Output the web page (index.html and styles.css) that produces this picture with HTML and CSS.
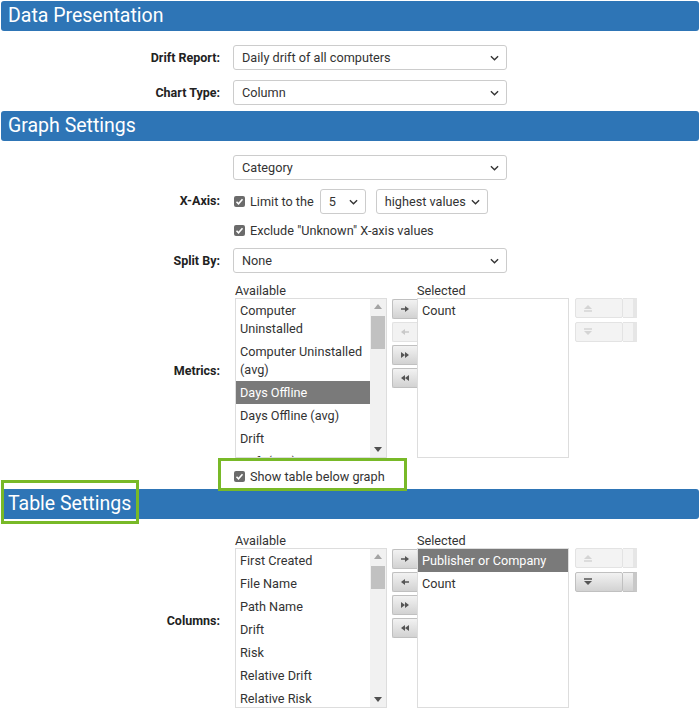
FILE: index.html
```html
<!DOCTYPE html>
<html lang="en">
<head>
  <meta charset="UTF-8">
  <title>Report Settings</title>
  <link rel="stylesheet" href="styles.css">
</head>
<body>
  <div class="panel">
    <h2 class="section-title">Data Presentation</h2>
    <div class="form form-first">
      <div class="form-row">
        <label class="field-label">Drift Report:</label>
        <div class="select select-wide"><span>Daily drift of all computers</span><svg class="chev" viewBox="0 0 10 6"><path d="M1 1l4 4 4-4"/></svg></div>
      </div>
      <div class="form-row gap-10">
        <label class="field-label">Chart Type:</label>
        <div class="select select-wide"><span>Column</span><svg class="chev" viewBox="0 0 10 6"><path d="M1 1l4 4 4-4"/></svg></div>
      </div>
    </div>

    <h2 class="section-title gap-6">Graph Settings</h2>
    <div class="form form-first">
      <div class="form-row">
        <label class="field-label xaxis-label">X-Axis:</label>
        <div class="field-stack">
          <div class="select select-wide"><span>Category</span><svg class="chev" viewBox="0 0 10 6"><path d="M1 1l4 4 4-4"/></svg></div>
          <div class="inline-row">
            <span class="check"><svg viewBox="0 0 11 11"><path d="M2.5 5.8l2 2 4-4.6"/></svg></span>
            <span class="check-text">Limit to the</span>
            <div class="select select-num"><span>5</span><svg class="chev" viewBox="0 0 10 6"><path d="M1 1l4 4 4-4"/></svg></div>
            <div class="select select-sort"><span>highest values</span><svg class="chev" viewBox="0 0 10 6"><path d="M1 1l4 4 4-4"/></svg></div>
          </div>
          <div class="inline-row exclude-row">
            <span class="check"><svg viewBox="0 0 11 11"><path d="M2.5 5.8l2 2 4-4.6"/></svg></span>
            <span class="check-text">Exclude "Unknown" X-axis values</span>
          </div>
        </div>
      </div>
      <div class="form-row gap-10">
        <label class="field-label">Split By:</label>
        <div class="select select-wide"><span>None</span><svg class="chev" viewBox="0 0 10 6"><path d="M1 1l4 4 4-4"/></svg></div>
      </div>
      <div class="form-row gap-10">
        <label class="field-label">Metrics:</label>
        <div class="transfer">
          <div class="list-col">
            <div class="list-title">Available</div>
            <div class="listbox">
              <ul class="list-items">
                <li>Computer<br>Uninstalled</li>
                <li>Computer Uninstalled (avg)</li>
                <li class="selected">Days Offline</li>
                <li>Days Offline (avg)</li>
                <li>Drift</li>
                <li>Drift (avg)</li>
              </ul>
              <div class="scrollbar">
                <svg class="scroll-up" viewBox="0 0 8 5"><path d="M0 5l4-5 4 5z"/></svg>
                <div class="scroll-thumb thumb-metrics"></div>
                <svg class="scroll-down" viewBox="0 0 8 5"><path d="M0 0l4 5 4-5z"/></svg>
              </div>
            </div>
          </div>
          <div class="move-buttons">
            <button class="btn"><svg viewBox="0 0 10 8"><path class="stroke" d="M1 4h6"/><path d="M5 1l4 3-4 3z"/></svg></button>
            <button class="btn disabled"><svg viewBox="0 0 10 8"><path class="stroke" d="M3 4h6"/><path d="M5 1L1 4l4 3z"/></svg></button>
            <button class="btn"><svg viewBox="0 0 10 8"><path d="M1 1l4 3-4 3zM5 1l4 3-4 3z"/></svg></button>
            <button class="btn"><svg viewBox="0 0 10 8"><path d="M9 1L5 4l4 3zM5 1L1 4l4 3z"/></svg></button>
          </div>
          <div class="list-col">
            <div class="list-title">Selected</div>
            <div class="listbox">
              <ul class="list-items">
                <li>Count</li>
              </ul>
            </div>
          </div>
          <div class="order-buttons">
            <div class="order-btn disabled"><span class="order-main"><svg viewBox="0 0 10 8"><path d="M1 5l4-4 4 4z"/><path class="stroke" d="M1 7h8"/></svg></span><span class="order-tail"></span></div>
            <div class="order-btn disabled"><span class="order-main"><svg viewBox="0 0 10 8"><path class="stroke" d="M1 1h8"/><path d="M1 3l4 4 4-4z"/></svg></span><span class="order-tail"></span></div>
          </div>
        </div>
      </div>
      <div class="form-row">
        <span></span>
        <div class="inline-row show-row">
          <span class="check"><svg viewBox="0 0 11 11"><path d="M2.5 5.8l2 2 4-4.6"/></svg></span>
          <span class="check-text">Show table below graph</span>
        </div>
      </div>
    </div>

    <h2 class="section-title">Table Settings</h2>
    <div class="form">
      <div class="form-row gap-14">
        <label class="field-label">Columns:</label>
        <div class="transfer">
          <div class="list-col">
            <div class="list-title">Available</div>
            <div class="listbox">
              <ul class="list-items">
                <li>First Created</li>
                <li>File Name</li>
                <li>Path Name</li>
                <li>Drift</li>
                <li>Risk</li>
                <li>Relative Drift</li>
                <li>Relative Risk</li>
              </ul>
              <div class="scrollbar">
                <svg class="scroll-up" viewBox="0 0 8 5"><path d="M0 5l4-5 4 5z"/></svg>
                <div class="scroll-thumb thumb-columns"></div>
                <svg class="scroll-down" viewBox="0 0 8 5"><path d="M0 0l4 5 4-5z"/></svg>
              </div>
            </div>
          </div>
          <div class="move-buttons">
            <button class="btn"><svg viewBox="0 0 10 8"><path class="stroke" d="M1 4h6"/><path d="M5 1l4 3-4 3z"/></svg></button>
            <button class="btn"><svg viewBox="0 0 10 8"><path class="stroke" d="M3 4h6"/><path d="M5 1L1 4l4 3z"/></svg></button>
            <button class="btn"><svg viewBox="0 0 10 8"><path d="M1 1l4 3-4 3zM5 1l4 3-4 3z"/></svg></button>
            <button class="btn"><svg viewBox="0 0 10 8"><path d="M9 1L5 4l4 3zM5 1L1 4l4 3z"/></svg></button>
          </div>
          <div class="list-col">
            <div class="list-title">Selected</div>
            <div class="listbox">
              <ul class="list-items">
                <li class="selected">Publisher or Company</li>
                <li>Count</li>
              </ul>
            </div>
          </div>
          <div class="order-buttons">
            <div class="order-btn disabled"><span class="order-main"><svg viewBox="0 0 10 8"><path d="M1 5l4-4 4 4z"/><path class="stroke" d="M1 7h8"/></svg></span><span class="order-tail"></span></div>
            <div class="order-btn"><span class="order-main"><svg viewBox="0 0 10 8"><path class="stroke" d="M1 1h8"/><path d="M1 3l4 4 4-4z"/></svg></span><span class="order-tail"></span></div>
          </div>
        </div>
      </div>
    </div>

    <!-- annotation highlights -->
    <div class="highlight highlight-show"></div>
    <div class="highlight highlight-table"></div>
  </div>
</body>
</html>
```

FILE: styles.css
```css
* {
  margin: 0;
  padding: 0;
  box-sizing: border-box;
}

body {
  width: 700px;
  font-family: Roboto, 'Liberation Sans', sans-serif;
  font-size: 12.7px;
  color: #333333;
  background: #ffffff;
  overflow: hidden;
}

.panel {
  position: relative;
  padding: 1px;
}

.section-title {
  height: 30px;
  padding-left: 7px;
  background: #2e75b6;
  border-radius: 3px;
  color: #ffffff;
  font-size: 19.5px;
  font-weight: 400;
  line-height: 30px;
}

.form {
  display: flex;
  flex-direction: column;
}

.form-first {
  margin-top: 14px;
}

.form-row {
  display: grid;
  grid-template-columns: 219px 1fr;
  column-gap: 13px;
  align-items: center;
}

.gap-6 { margin-top: 6px; }
.gap-10 { margin-top: 10px; }
.gap-14 { margin-top: 14px; }

.field-label {
  text-align: right;
  font-size: 12.5px;
  font-weight: 700;
  color: #222222;
}

.xaxis-label {
  padding-top: 8px;
}

.field-stack {
  display: flex;
  flex-direction: column;
  gap: 9px;
}

/* fake select */
.select {
  display: flex;
  align-items: center;
  justify-content: space-between;
  height: 25px;
  padding: 0 7px 0 8px;
  background: #ffffff;
  border: 1px solid #cccccc;
  border-radius: 3px;
  color: #333333;
}

.select-wide { width: 274px; }
.select-num { width: 46px; margin-left: 6px; }
.select-sort { width: 112px; margin-left: 10px; }

.chev {
  width: 9px;
  height: 6px;
  fill: none;
  stroke: #333333;
  stroke-width: 1.5;
}

.inline-row {
  display: flex;
  align-items: center;
}

.exclude-row {
  height: 16px;
  margin-top: -1px;
}

.check {
  display: inline-flex;
  width: 11px;
  height: 11px;
  margin-left: 1px;
  margin-right: 5px;
  background: #6b6b6b;
  border-radius: 2px;
}

.check svg {
  width: 11px;
  height: 11px;
  fill: none;
  stroke: #ffffff;
  stroke-width: 1.6;
}

.check-text {
  color: #333333;
}

.show-row {
  padding: 11px 0 5px;
}

/* dual list picker */
.transfer {
  display: flex;
  margin-left: 2px;
}

.list-col {
  width: 152px;
}

.list-title {
  height: 15px;
  line-height: 15px;
  color: #333333;
}

.listbox {
  display: flex;
  height: 160px;
  overflow: hidden;
  background: #ffffff;
  border: 1px solid #dddddd;
}

.list-items {
  flex: 1;
  list-style: none;
}

.list-items li {
  padding: 2.5px 2px 2.5px 4px;
  line-height: 18px;
  color: #333333;
}

.list-items li.selected {
  background: #7a7a7a;
  color: #ffffff;
}

.scrollbar {
  position: relative;
  width: 16px;
  flex-shrink: 0;
  background: #f1f1f1;
}

.scroll-up,
.scroll-down {
  position: absolute;
  left: 4px;
  width: 8px;
  height: 5px;
}

.scroll-up {
  top: 5px;
  fill: #a3a3a3;
}

.scroll-down {
  bottom: 5px;
  fill: #505050;
}

.scroll-thumb {
  position: absolute;
  left: 1px;
  right: 1px;
  background: #c1c1c1;
}

.thumb-metrics { top: 17px; height: 33px; }
.thumb-columns { top: 17px; height: 23px; }

.move-buttons {
  display: flex;
  flex-direction: column;
  gap: 3px;
  margin-left: 5px;
  padding-top: 16px;
}

.btn {
  display: flex;
  align-items: center;
  justify-content: center;
  width: 25px;
  height: 20px;
  background: linear-gradient(#f2f2f2, #d2d2d2);
  border: 1px solid #c0c0c0;
  border-right: none;
  border-radius: 2px 0 0 2px;
}

.btn svg {
  width: 10px;
  height: 8px;
  fill: #555555;
}

.btn svg .stroke,
.order-btn svg .stroke {
  fill: none;
  stroke: #555555;
  stroke-width: 1.5;
}

.btn.disabled {
  background: #f2f2f2;
  border-color: #e2e2e2;
}

.btn.disabled svg { fill: #c8c8c8; }
.btn.disabled svg .stroke { stroke: #c8c8c8; }

.order-buttons {
  display: flex;
  flex-direction: column;
  gap: 4px;
  margin-left: 6px;
  padding-top: 15px;
}

.order-btn {
  display: flex;
  height: 20px;
}

.order-main {
  display: flex;
  align-items: center;
  width: 48px;
  padding-left: 7px;
  background: linear-gradient(#f2f2f2, #d2d2d2);
  border: 1px solid #c0c0c0;
  border-radius: 2px;
}

.order-tail {
  width: 14px;
  background: linear-gradient(#f2f2f2, #d2d2d2);
  border-top: 1px solid #c0c0c0;
  border-bottom: 1px solid #c0c0c0;
  border-right: 4px solid #c8c8c8;
}

.order-btn svg {
  width: 10px;
  height: 8px;
  fill: #555555;
}

.order-btn.disabled .order-main,
.order-btn.disabled .order-tail {
  background: #f3f3f3;
  border-color: #e3e3e3;
}

.order-btn.disabled .order-tail {
  border-right-color: #e6e6e6;
}

.order-btn.disabled svg { fill: #d4d4d4; }
.order-btn.disabled svg .stroke { stroke: #d4d4d4; }

/* green annotation boxes */
.highlight {
  position: absolute;
  border: 3.5px solid #78b928;
}

.highlight-show {
  left: 218px;
  top: 458px;
  width: 189px;
  height: 33px;
}

.highlight-table {
  left: 1px;
  top: 480px;
  width: 138px;
  height: 44px;
}
```
